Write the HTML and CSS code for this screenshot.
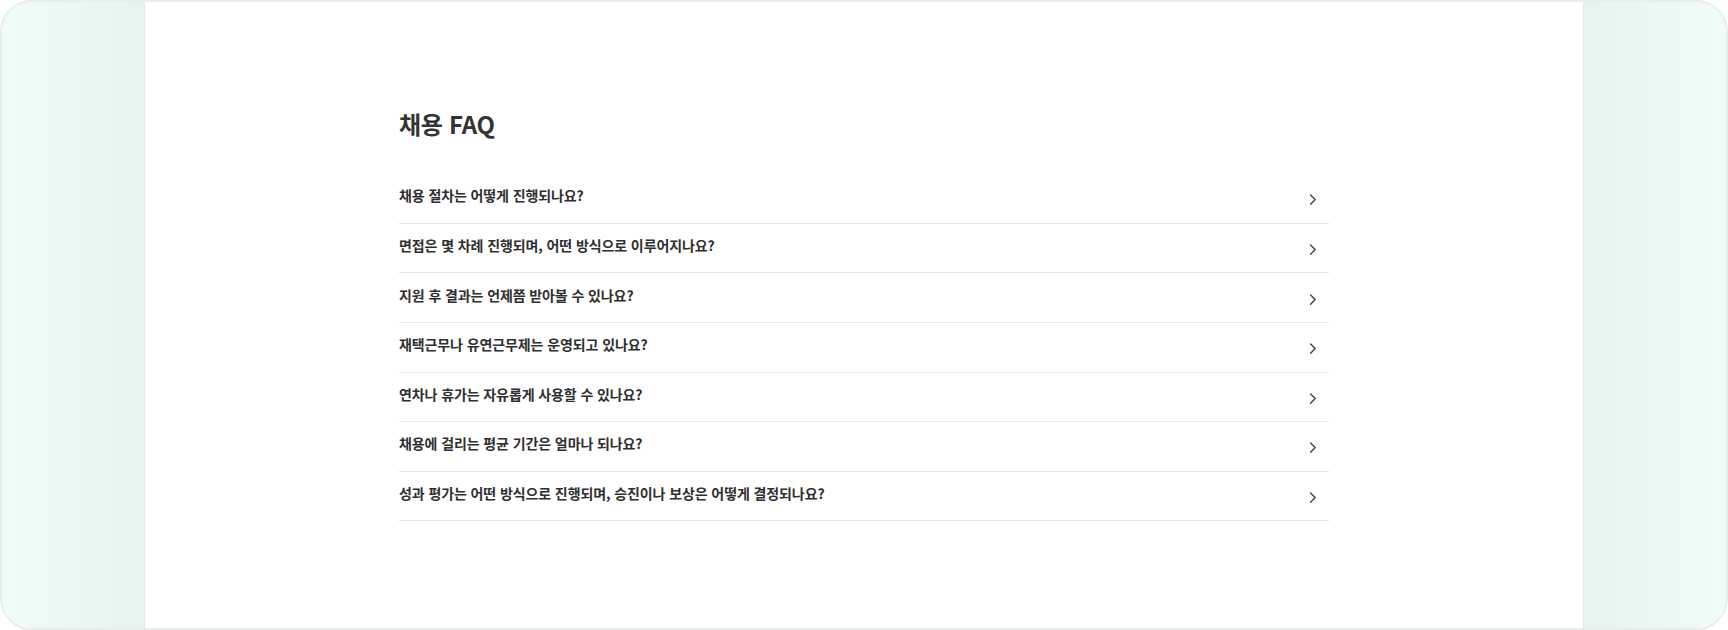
FILE: index.html
```html
<!DOCTYPE html>
<html lang="ko">
<head>
<meta charset="utf-8">
<title>채용 FAQ</title>
<link rel="stylesheet" href="styles.css">
</head>
<body>
<div class="frame">
  <aside class="side side-left"></aside>
  <main class="main">
    <section class="faq">
      <h1 class="faq-title">채용 FAQ</h1>
      <ul class="faq-list">
        <li class="faq-item"><span class="faq-q">채용 절차는 어떻게 진행되나요?</span><svg class="chev" viewBox="0 0 8 17.6" width="8" height="17.6"><path d="M1.6 7.9 L6.2 12.6 L1.6 17.3" /></svg></li>
        <li class="faq-item"><span class="faq-q">면접은 몇 차례 진행되며, 어떤 방식으로 이루어지나요?</span><svg class="chev" viewBox="0 0 8 17.6" width="8" height="17.6"><path d="M1.6 7.9 L6.2 12.6 L1.6 17.3" /></svg></li>
        <li class="faq-item"><span class="faq-q">지원 후 결과는 언제쯤 받아볼 수 있나요?</span><svg class="chev" viewBox="0 0 8 17.6" width="8" height="17.6"><path d="M1.6 7.9 L6.2 12.6 L1.6 17.3" /></svg></li>
        <li class="faq-item"><span class="faq-q">재택근무나 유연근무제는 운영되고 있나요?</span><svg class="chev" viewBox="0 0 8 17.6" width="8" height="17.6"><path d="M1.6 7.9 L6.2 12.6 L1.6 17.3" /></svg></li>
        <li class="faq-item"><span class="faq-q">연차나 휴가는 자유롭게 사용할 수 있나요?</span><svg class="chev" viewBox="0 0 8 17.6" width="8" height="17.6"><path d="M1.6 7.9 L6.2 12.6 L1.6 17.3" /></svg></li>
        <li class="faq-item"><span class="faq-q">채용에 걸리는 평균 기간은 얼마나 되나요?</span><svg class="chev" viewBox="0 0 8 17.6" width="8" height="17.6"><path d="M1.6 7.9 L6.2 12.6 L1.6 17.3" /></svg></li>
        <li class="faq-item"><span class="faq-q">성과 평가는 어떤 방식으로 진행되며, 승진이나 보상은 어떻게 결정되나요?</span><svg class="chev" viewBox="0 0 8 17.6" width="8" height="17.6"><path d="M1.6 7.9 L6.2 12.6 L1.6 17.3" /></svg></li>
      </ul>
    </section>
  </main>
  <aside class="side side-right"></aside>
</div>
</body>
</html>
```
FILE: styles.css
```css
* { box-sizing: border-box; }
html, body { margin: 0; padding: 0; background: #ffffff; }
body {
  font-family: "Noto Sans CJK KR", "Noto Sans", sans-serif;
  color: #333333;
}
.frame {
  width: 1728px;
  height: 630px;
  display: grid;
  grid-template-columns: 143px 1fr 143px;
  border: 2px solid #e8eeec;
  border-radius: 32px;
  overflow: hidden;
  background: #ffffff;
}
.side-left {
  background: linear-gradient(to right, #f0fcf8, #e6f3f0);
  border-right: 1px solid #dfe9e6;
}
.side-right {
  background: linear-gradient(to right, #e6f3f0, #f0fcf8);
  border-left: 1px solid #dfe9e6;
}
.main {
  display: flex;
  justify-content: center;
  padding-top: 106px;
}
.faq {
  width: 930px;
}
.faq-title {
  margin: 0 0 34.2px;
  font-size: 24px;
  line-height: 32px;
  font-weight: 700;
  color: #333333;
  letter-spacing: -0.3px;
}
.faq-list {
  list-style: none;
  margin: 0;
  padding: 0;
}
.faq-item {
  display: flex;
  align-items: center;
  justify-content: space-between;
  padding: 13.3px 12px 17.7px 0;
  border-bottom: 1px solid #e6e6e6;
}
.faq-q {
  font-size: 14px;
  line-height: 17.6px;
  font-weight: 700;
  letter-spacing: -0.1px;
  color: #2f2f2f;
}
.chev {
  flex: none;
  overflow: visible;
  fill: none;
  stroke: #444444;
  stroke-width: 1.4;
  stroke-linecap: round;
  stroke-linejoin: round;
}
```
